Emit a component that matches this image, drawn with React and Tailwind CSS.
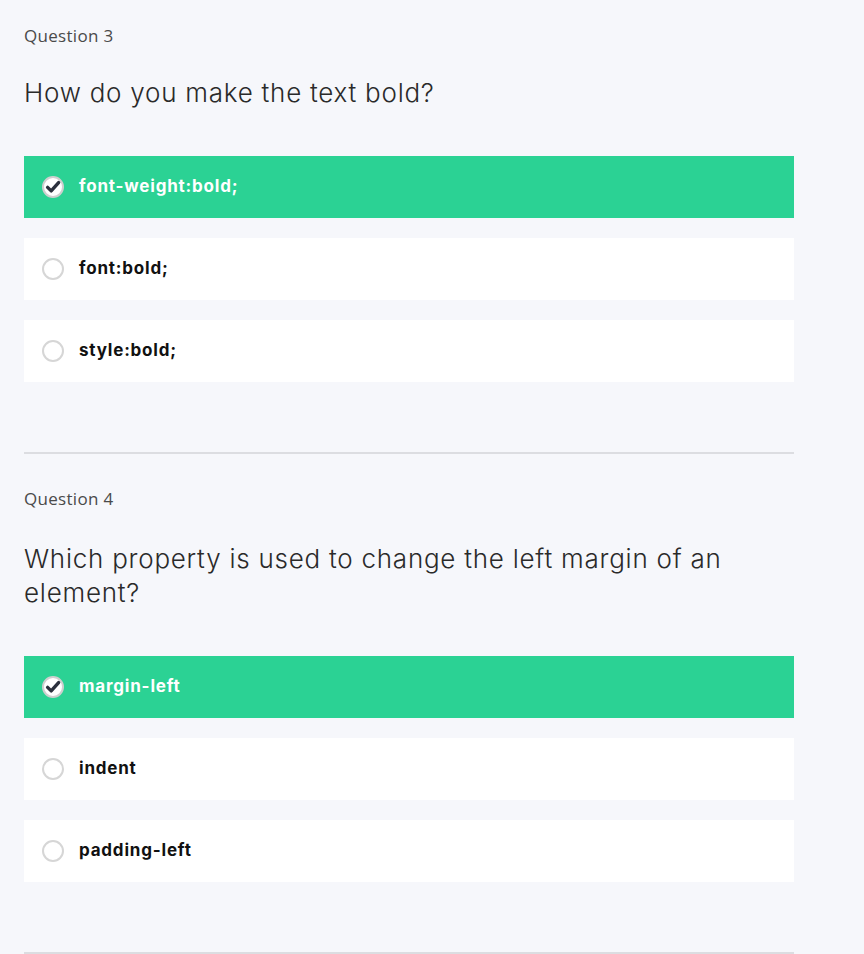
import React from 'react';

const questions = [
  {
    label: 'Question 3',
    title: 'How do you make the text bold?',
    options: [
      { text: 'font-weight:bold;', correct: true },
      { text: 'font:bold;' },
      { text: 'style:bold;' },
    ],
  },
  {
    label: 'Question 4',
    title: 'Which property is used to change the left margin of an element?',
    options: [
      { text: 'margin-left', correct: true },
      { text: 'indent' },
      { text: 'padding-left' },
    ],
  },
];

const CheckedRadio = () => (
  <svg width="22" height="22" viewBox="0 0 22 22" className="shrink-0">
    <circle cx="11" cy="11" r="10" fill="#ffffff" stroke="#cfcfcf" strokeWidth="2" />
    <path d="M5.6 11.4 L9.2 14.9 L16.6 6.6" fill="none" stroke="#2b303d" strokeWidth="3.4" strokeLinecap="round" strokeLinejoin="round" />
  </svg>
);

const EmptyRadio = () => (
  <span className="block w-[22px] h-[22px] shrink-0 rounded-full border-2 border-[#d6d6d6] bg-white" />
);

const Option = ({ text, correct }) => (
  <div
    className={`h-[62px] flex items-center pl-[18px] gap-[15px] ${
      correct ? 'bg-[#2bd294] text-white' : 'bg-white text-[#111]'
    }`}
  >
    {correct ? <CheckedRadio /> : <EmptyRadio />}
    <span className="font-['Inter',sans-serif] font-bold text-[17px] tracking-[0.8px]">{text}</span>
  </div>
);

export default function App() {
  return (
    <div className="min-h-screen bg-[#f6f7fb] pl-6">
      <div className="w-[770px]">
        {questions.map((q, i) => (
          <div key={q.label}>
            <div className={i === 0 ? 'pt-6' : 'pt-[33px]'}>
              <p className="font-['Open_Sans',sans-serif] text-[17px] leading-6 tracking-[0.3px] text-[#4a4a4a]">{q.label}</p>
              <h2
                className={`${i === 0 ? 'mt-[28px]' : 'mt-[31px]'} mb-[46px] font-['Inter',sans-serif] font-light text-[26px] leading-[34px] tracking-[0.75px] text-[#2a2a2a] max-w-[730px]`}
              >
                {q.title}
              </h2>
              <div className="flex flex-col gap-5">
                {q.options.map((o) => (
                  <Option key={o.text} text={o.text} correct={o.correct} />
                ))}
              </div>
            </div>
            <div className="mt-[70px] h-[2px] bg-[#dcdde1]" />
          </div>
        ))}
      </div>
    </div>
  );
}
